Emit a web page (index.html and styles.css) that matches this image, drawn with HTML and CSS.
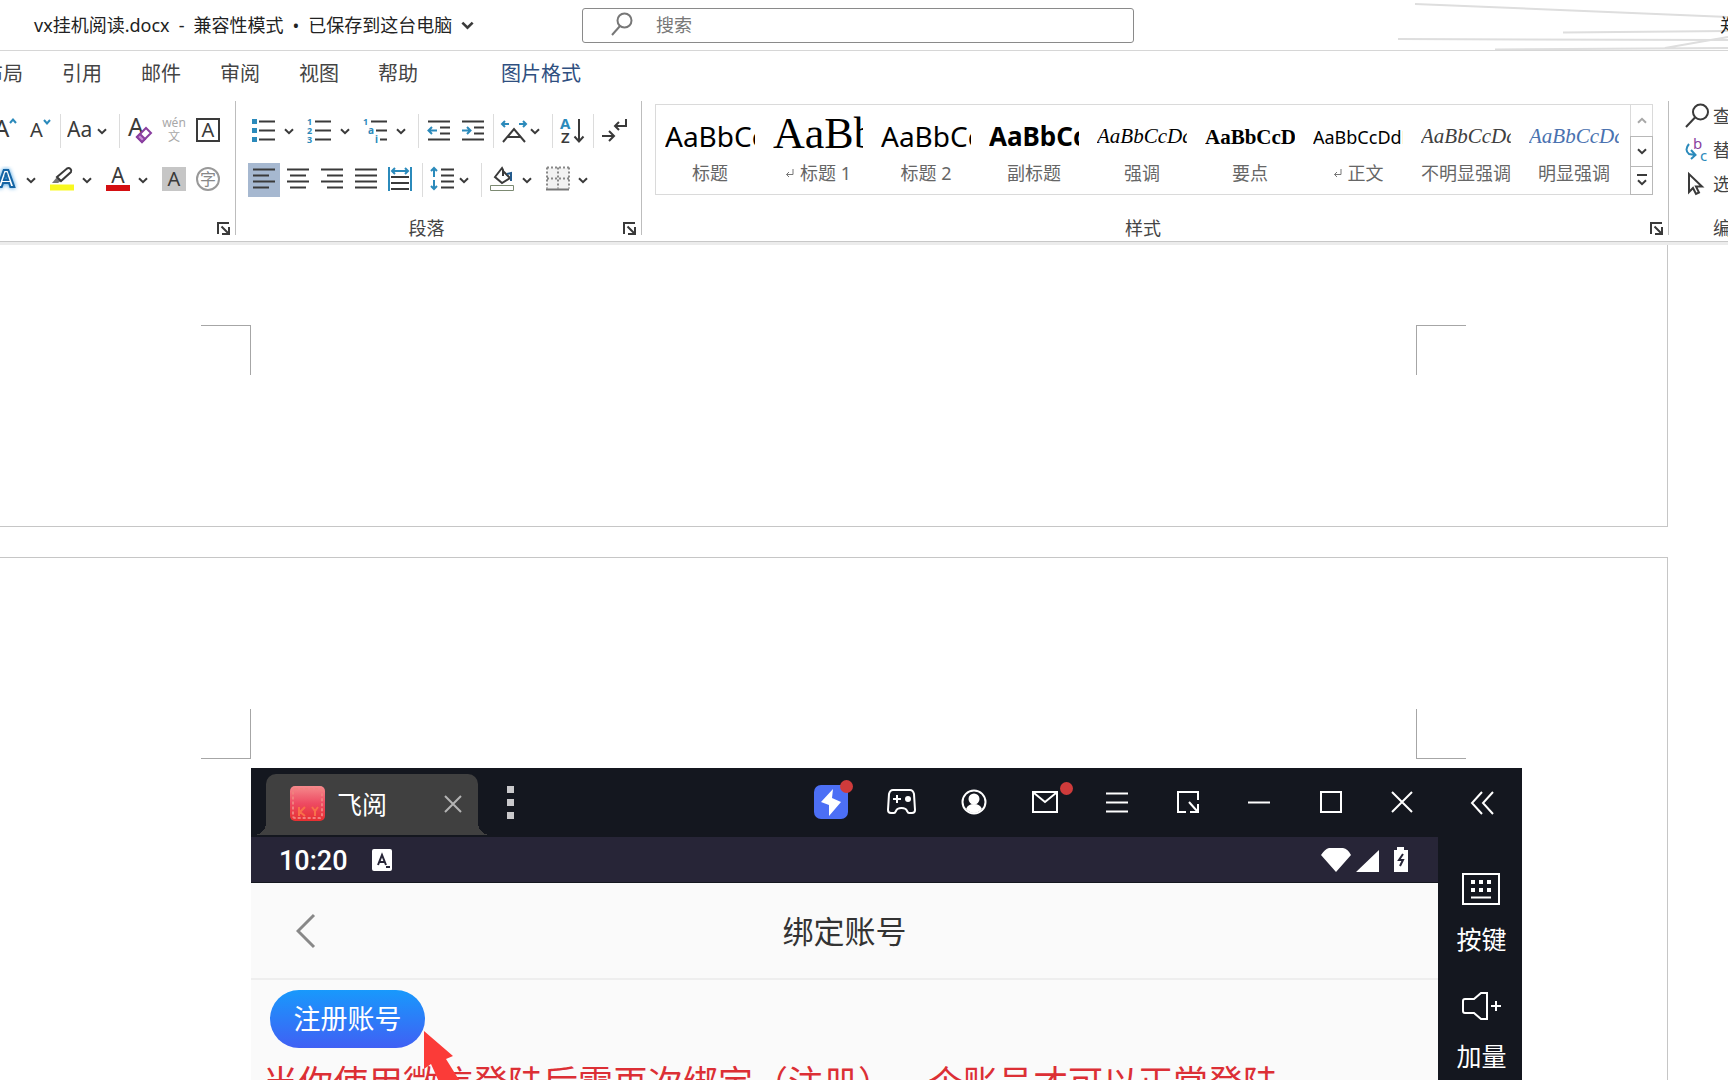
FILE: index.html
```html
<!DOCTYPE html>
<html lang="zh-CN">
<head>
<meta charset="utf-8">
<meta name="viewport" content="width=device-width, initial-scale=1">
<title>vx挂机阅读.docx</title>
<link rel="stylesheet" href="styles.css">
</head>
<body>
<svg class="defs" aria-hidden="true">
  <symbol id="caret" viewBox="0 0 10 7"><path d="M1 1.200l4 4 4-4"/></symbol>
  <symbol id="launch" viewBox="0 0 13 13"><path d="M1 12V1h11M4.500 4.500l7 7M12 5v7H5"/></symbol>
  <symbol id="enter" viewBox="0 0 9 9"><path d="M8 0v5.500H1.500M4 3L1.500 5.500 4 8"/></symbol>
</svg>

<header class="titlebar">
  <svg class="decor" viewBox="0 0 330 50" aria-hidden="true"><path d="M17 4L330 17M165 32.500L330 31M0 39L330 40M97 49.500L330 48M267 48L330 37"/></svg>
  <h1 class="doc-title"><span>vx挂机阅读.docx</span><span>-</span><span>兼容性模式</span><span>•</span><span>已保存到这台电脑</span><svg class="caret caret-lg"><use href="#caret"/></svg></h1>
  <label class="search">
    <svg viewBox="0 0 22 26" aria-hidden="true"><circle cx="13.500" cy="8.500" r="7"/><path d="M9 14L1 23"/></svg>
    <input type="search" placeholder="搜索" aria-label="搜索">
  </label>
  <span class="user">郑</span>
</header>

<nav class="tabs">
  <a href="#">布局</a><a href="#">引用</a><a href="#">邮件</a><a href="#">审阅</a><a href="#">视图</a><a href="#">帮助</a><a href="#" class="contextual">图片格式</a>
</nav>

<section class="ribbon">
  <div class="group font-group">
    <div class="rows">
      <div class="row">
        <button class="tool" aria-label="增大字号"><svg viewBox="0 0 28 28"><text x="2" y="20" font-size="24">A</text><path class="b" d="M18 6l3-3.500L24 6"/></svg></button>
        <button class="tool" aria-label="减小字号"><svg viewBox="0 0 28 28"><text x="4" y="20" font-size="20">A</text><path class="b" d="M18 3l3 3.500L24 3"/></svg></button>
        <i class="sep"></i>
        <button class="tool split narrow" aria-label="更改大小写"><svg viewBox="0 0 28 28"><text x="0" y="20" font-size="21">Aa</text></svg><svg class="caret"><use href="#caret"/></svg></button>
        <i class="sep"></i>
        <button class="tool" aria-label="清除格式"><svg viewBox="0 0 28 28"><text x="2" y="19" font-size="25">A</text><path class="eraser" d="M11 20l9-9 5 5-9 9z"/><path class="eraser-tip" d="M11 20l3-3 5 5-3 3z"/></svg></button>
        <button class="tool faint" aria-label="拼音指南"><svg viewBox="0 0 28 28"><text x="14" y="10" font-size="12" text-anchor="middle">wén</text><text x="14" y="24" font-size="12" text-anchor="middle">文</text></svg></button>
        <button class="tool" aria-label="字符边框"><svg viewBox="0 0 28 28"><rect x="3" y="2" width="22" height="22"/><text x="14" y="20" font-size="20" text-anchor="middle">A</text></svg></button>
      </div>
      <div class="row">
        <button class="tool split" aria-label="文本效果"><svg viewBox="0 0 28 28"><text class="glow" x="14" y="21" font-size="24" text-anchor="middle">A</text></svg><svg class="caret"><use href="#caret"/></svg></button>
        <button class="tool split" aria-label="突出显示"><svg viewBox="0 0 28 28"><path class="fill-grey" d="M4 17l5-6 4 4-3 2z"/><path d="M9 11L19 2.500q2-1 3.500.5t.5 3L13 15z"/><path class="hl" d="M2 21.500h24"/></svg><svg class="caret"><use href="#caret"/></svg></button>
        <button class="tool split" aria-label="字体颜色"><svg viewBox="0 0 28 28"><text x="14" y="17" font-size="21" text-anchor="middle">A</text><path class="fc" d="M2 22h24"/></svg><svg class="caret"><use href="#caret"/></svg></button>
        <button class="tool" aria-label="字符底纹"><svg viewBox="0 0 28 28"><path class="fill-light" d="M2 1h24v24H2z"/><text x="14" y="20" font-size="20" text-anchor="middle">A</text></svg></button>
        <button class="tool ring" aria-label="带圈字符"><svg viewBox="0 0 28 28"><circle cx="14" cy="13" r="11"/><text x="14" y="19" font-size="16" text-anchor="middle">字</text></svg></button>
      </div>
    </div>
    <div class="group-foot"><span></span><button class="launch" aria-label="字体设置"><svg><use href="#launch"/></svg></button></div>
  </div>
  <i class="divider"></i>

  <div class="group para-group">
    <div class="rows">
      <div class="row inset">
        <button class="tool split" aria-label="项目符号"><svg viewBox="0 0 28 28"><path class="bf" d="M2 2h5v5H2zM2 11h5v5H2zM2 20h5v5H2z"/><path d="M9 4.500h16M9 13.500h16M9 22.500h16"/></svg><svg class="caret"><use href="#caret"/></svg></button>
        <button class="tool split" aria-label="编号"><svg viewBox="0 0 28 28"><text class="bt" x="1" y="8" font-size="9">1</text><text class="bt" x="1" y="17" font-size="9">2</text><text class="bt" x="1" y="26" font-size="9">3</text><path d="M9 4.500h16M9 13.500h16M9 22.500h16"/></svg><svg class="caret"><use href="#caret"/></svg></button>
        <button class="tool split" aria-label="多级列表"><svg viewBox="0 0 28 28"><text class="bt" x="1" y="8" font-size="9">1</text><text class="bt" x="6" y="17" font-size="10">a</text><text class="bt" x="13" y="26" font-size="10">i</text><path d="M9 4.500h16M14 13.500h11M18 22.500h7"/></svg><svg class="caret"><use href="#caret"/></svg></button>
        <i class="sep"></i>
        <button class="tool" aria-label="减少缩进"><svg viewBox="0 0 28 28"><path d="M3 4.500h22M15 10.500h10M15 16.500h10M3 22.500h22"/><path class="b" d="M12 13.500H4M7 10l-3.500 3.500L7 17"/></svg></button>
        <button class="tool" aria-label="增加缩进"><svg viewBox="0 0 28 28"><path d="M3 4.500h22M15 10.500h10M15 16.500h10M3 22.500h22"/><path class="b" d="M3 13.500h8M8 10l3.500 3.500L8 17"/></svg></button>
        <i class="sep"></i>
        <button class="tool split narrow" aria-label="中文版式"><svg viewBox="0 0 28 28"><path d="M3 25L14 12l11 13M7 20h14"/><path class="b" d="M2 7h7M5 4L2 7l3 3M26 7h-7M23 4l3 3-3 3"/></svg><svg class="caret"><use href="#caret"/></svg></button>
        <i class="sep"></i>
        <button class="tool" aria-label="排序"><svg viewBox="0 0 28 28"><text class="bt" x="1" y="12" font-size="15">A</text><text x="2" y="26" font-size="15" font-weight="600">Z</text><path d="M20 2v22M15.500 19.500L20 24.500l4.500-5"/></svg></button>
        <i class="sep"></i>
        <button class="tool" aria-label="显示编辑标记"><svg viewBox="0 0 28 28"><path d="M26 2v7H15M19 5l-4 4 4 4M2 19h12M9 14l5 5-5 5"/></svg></button>
      </div>
      <div class="row">
        <div class="aligns">
          <button class="tool align on" aria-label="左对齐"><svg viewBox="0 0 28 28"><path d="M3 3.500h22M3 9.500h16M3 15.500h22M3 21.500h16"/></svg></button>
          <button class="tool align" aria-label="居中"><svg viewBox="0 0 28 28"><path d="M3 3.500h22M6 9.500h16M3 15.500h22M6 21.500h16"/></svg></button>
          <button class="tool align" aria-label="右对齐"><svg viewBox="0 0 28 28"><path d="M3 3.500h22M9 9.500h16M3 15.500h22M9 21.500h16"/></svg></button>
          <button class="tool align" aria-label="两端对齐"><svg viewBox="0 0 28 28"><path d="M3 3.500h22M3 9.500h22M3 15.500h22M3 21.500h22"/></svg></button>
          <button class="tool align" aria-label="分散对齐"><svg viewBox="0 0 28 28"><path d="M5 11h18M5 17h18M5 23h18"/><path class="b" d="M3 1v24M25 1v24M6 5h16M9 2L6 5l3 3M19 2l3 3-3 3"/></svg></button>
        </div>
        <i class="sep"></i>
        <button class="tool split narrow" aria-label="行距"><svg viewBox="0 0 28 28"><path d="M12 3.500h13M12 9.500h13M12 15.500h13M12 21.500h13"/><path class="b" d="M5 2v9M2 5l3-3 3 3M5 14v9M2 20l3 3 3-3"/></svg><svg class="caret"><use href="#caret"/></svg></button>
        <i class="sep"></i>
        <button class="tool split" aria-label="底纹"><svg viewBox="0 0 28 28"><path class="thin" d="M2.500 19.500h23v5h-23z"/><path d="M15 5l7 7-8 5-7-6 7-9 1 2v6"/><path class="bd" d="M19 8l4-1v8"/></svg><svg class="caret"><use href="#caret"/></svg></button>
        <button class="tool split" aria-label="边框"><svg viewBox="0 0 28 28"><path class="tint" d="M3 2h22v21H3z"/><path class="dots" d="M3 1.500h22M3 1.500v21M25 1.500v21M14 1.500v21M3 12.500h22"/><path class="grey" d="M2 23.500h23"/></svg><svg class="caret"><use href="#caret"/></svg></button>
      </div>
    </div>
    <div class="group-foot"><span>段落</span><button class="launch" aria-label="段落设置"><svg><use href="#launch"/></svg></button></div>
  </div>
  <i class="divider"></i>

  <div class="group style-group">
    <div class="gallery">
      <div class="styles">
        <button class="style"><span class="sample big">AaBbCc</span><span class="name">标题</span></button>
        <button class="style"><span class="sample huge">AaBb</span><span class="name"><svg class="enter"><use href="#enter"/></svg>标题 1</span></button>
        <button class="style"><span class="sample big">AaBbCc</span><span class="name">标题 2</span></button>
        <button class="style"><span class="sample big strong">AaBbCc</span><span class="name">副标题</span></button>
        <button class="style"><span class="sample italic">AaBbCcDd</span><span class="name">强调</span></button>
        <button class="style"><span class="sample serif-bold">AaBbCcD</span><span class="name">要点</span></button>
        <button class="style"><span class="sample body">AaBbCcDdE</span><span class="name"><svg class="enter"><use href="#enter"/></svg>正文</span></button>
        <button class="style"><span class="sample italic soft">AaBbCcDd</span><span class="name">不明显强调</span></button>
        <button class="style"><span class="sample italic accent">AaBbCcDd</span><span class="name">明显强调</span></button>
      </div>
      <div class="gallery-nav">
        <button disabled aria-label="上一行"><svg class="caret up"><use href="#caret"/></svg></button>
        <button aria-label="下一行"><svg class="caret"><use href="#caret"/></svg></button>
        <button class="more" aria-label="其他"><svg class="caret"><use href="#caret"/></svg></button>
      </div>
    </div>
    <div class="group-foot"><span>样式</span><button class="launch" aria-label="样式设置"><svg><use href="#launch"/></svg></button></div>
  </div>
  <i class="divider"></i>

  <div class="group edit-group">
    <div class="edits">
      <button class="edit"><svg viewBox="0 0 26 26"><circle cx="16.500" cy="9" r="7.500"/><path d="M11 14.500L2 24"/></svg>查找</button>
      <button class="edit"><svg viewBox="0 0 26 26"><text class="pt" x="9" y="12" font-size="15">b</text><text class="bl" x="16" y="24" font-size="15">c</text><path class="b" d="M5 7q-5 6 0 10l6 1M7 13l4.500 5L7 22"/></svg>替换</button>
      <button class="edit"><svg viewBox="0 0 26 26"><path d="M5 3v18l4-4 3 6 3-1.500-3-6h6z"/></svg>选择</button>
    </div>
    <div class="group-foot edit-foot"><span>编辑</span></div>
  </div>
</section>

<main class="workspace">
  <article class="sheet first">
    <div class="marks top"><i></i><i></i></div>
  </article>
  <article class="sheet second">
    <div class="marks bottom"><i></i><i></i></div>
    <div class="emulator">
      <div class="screen">
        <div class="emu-bar">
          <div class="emu-tab">
            <svg class="app-icon" viewBox="0 0 35 35" aria-hidden="true"><defs><linearGradient id="ag" x2="0" y2="1"><stop offset="0" stop-color="#f58a8c"/><stop offset=".5" stop-color="#ee4a62"/><stop offset="1" stop-color="#e62f30"/></linearGradient></defs><rect width="35" height="35" rx="5" fill="url(#ag)"/><rect x="3" y="3" width="29" height="29" rx="2" fill="none" stroke="#f0807e" stroke-dasharray="3 2"/><path d="M9 21v9M15 21l-5 5 5 4M22 21l3 4 3-4M25 25v5" stroke="#f8704a" stroke-width="2" fill="none"/></svg>
            <span>飞阅</span>
            <button class="tab-close" aria-label="关闭标签"><svg viewBox="0 0 18 18"><path d="M1 1l16 16M17 1L1 17"/></svg></button>
          </div>
          <button class="dots-btn" aria-label="更多"><i></i><i></i><i></i></button>
          <div class="emu-tools">
            <button aria-label="加速"><svg viewBox="0 0 36 36"><rect x="1" y="1" width="34" height="34" rx="7" fill="#4c6ff5" stroke="none"/><path d="M20 5l-1 9 9 4-12 14v-11l-8-3z" fill="#fff" stroke="none"/></svg><i class="badge"></i></button>
            <button aria-label="手柄"><svg viewBox="0 0 36 36"><path d="M9 6h17q3 0 4 4l1 16q0 3-3 3h-3q-1 0-2-2-1-3-5.500-3T12 27q-1 2-2 2H7q-3 0-3-3l1-16q1-4 4-4zM13 11v8M9 15h8"/><circle cx="24" cy="15" r="3" fill="#fff" stroke="none"/></svg></button>
            <button aria-label="账户"><svg viewBox="0 0 36 36"><circle cx="18" cy="18" r="11.500"/><circle cx="18" cy="15" r="4.500" fill="#fff"/><path d="M10 25q2-5 8-5t8 5q-8 8-16 0z" fill="#fff" stroke="none"/></svg></button>
            <button aria-label="邮件"><svg viewBox="0 0 36 36"><path d="M6 8h24v20H6zM7 9l11 9 11-9"/></svg><i class="badge far"></i></button>
            <button aria-label="菜单"><svg viewBox="0 0 36 36"><path d="M7 9.500h22M7 18.500h22M7 27.500h22"/></svg></button>
            <button aria-label="小窗"><svg viewBox="0 0 36 36"><path d="M28 16V8H8v20h8M19 18l8 9M28 20v8h-8"/></svg></button>
            <button aria-label="最小化"><svg viewBox="0 0 36 36"><path d="M7 18.500h22"/></svg></button>
            <button aria-label="最大化"><svg viewBox="0 0 36 36"><path d="M8 8h20v20H8z"/></svg></button>
            <button aria-label="关闭"><svg viewBox="0 0 36 36"><path d="M8 8l20 20M28 8L8 28"/></svg></button>
          </div>
        </div>
        <div class="status">
          <time>10:20</time>
          <svg class="s-a" viewBox="0 0 20 22" aria-hidden="true"><rect width="20" height="22" rx="2" fill="#fff"/><path d="M6 16l4-10 4 10M7 13h6M14 18h4" fill="none" stroke="#272537" stroke-width="2"/></svg>
          <svg class="s-sys" viewBox="0 0 88 26" aria-hidden="true"><path d="M0 8Q4 2 8 1h14q5 1 8 7L15 25zM35 25L58 3v22zM73 3h3V0h7v3h4v22H73z" fill="#fff"/><path d="M82 7l-4 6h4l-3 6" fill="none" stroke="#272537" stroke-width="2"/></svg>
        </div>
        <div class="app">
          <div class="app-head">
            <button class="back" aria-label="返回"><svg viewBox="0 0 20 36"><path d="M18 2L2 18l16 16"/></svg></button>
            <h2>绑定账号</h2>
          </div>
          <div class="app-body">
            <button class="register">注册账号</button>
            <svg class="pointer" viewBox="0 0 40 60" aria-hidden="true"><path d="M0 0l29 25-7 3 20 32H19L7 33l-7 5z"/></svg>
            <p>当你使用微信登陆后需再次绑定（注册）一个账号才可以正常登陆</p>
          </div>
        </div>
      </div>
      <aside class="side">
        <button class="collapse" aria-label="收起"><svg viewBox="0 0 24 24"><path d="M12 1L2 12l10 11M23 1L13 12l10 11"/></svg></button>
        <button class="side-item"><svg viewBox="0 0 40 34"><path d="M2 2h36v30H2zM10 25.500h20"/><path class="keys" d="M10 8h4v4h-4zM18 8h4v4h-4zM26 8h4v4h-4zM10 16h4v4h-4zM18 16h4v4h-4zM26 16h4v4h-4z"/></svg>按键</button>
        <button class="side-item"><svg viewBox="0 0 40 34"><path d="M2 12q0-2 2-2h9l7-6h6v26h-6l-7-6H4q-2 0-2-2zM30 17h10M35 12v10"/></svg>加量</button>
      </aside>
    </div>
  </article>
</main>
</body>
</html>
```
FILE: styles.css
```css
* { box-sizing: border-box; }

body {
  margin: 0;
  height: 100vh;
  overflow: hidden;
  background: #fff;
  color: #222;
  font: 18px/26px "Noto Sans", "Noto Sans CJK SC", sans-serif;
  --ink: #3a3a3a;
  --blue: #2b8abb;
  --line: #c8c8c8;
}

button {
  margin: 0;
  padding: 0;
  border: 0;
  background: none;
  color: inherit;
  font: inherit;
}

svg { display: block; flex: none; }
i { display: block; flex: none; }
.defs { width: 0; height: 0; position: absolute; }

/* title bar */
.titlebar {
  position: relative;
  display: grid;
  grid-template-columns: 582px minmax(200px, 552px) 1fr;
  align-items: center;
  height: 51px;
  border-bottom: 1px solid #d6d6d6;
  overflow: hidden;
}
.decor {
  position: absolute;
  top: 0;
  right: 0;
  width: 330px;
  height: 50px;
  fill: none;
  stroke: #dedede;
  stroke-width: 2;
}
.doc-title {
  display: flex;
  align-items: center;
  gap: 9px;
  margin: 0;
  padding-left: 34px;
  font-size: 18px;
  font-weight: 400;
  white-space: nowrap;
}
.search {
  display: flex;
  align-items: center;
  gap: 23px;
  height: 35px;
  padding-left: 28px;
  border: 1px solid #8a8a8a;
  border-radius: 3px;
}
.search svg { width: 22px; height: 26px; fill: none; stroke: #777; stroke-width: 2; }
.search input {
  flex: 1;
  min-width: 0;
  padding: 0;
  border: 0;
  outline: 0;
  background: none;
  font: inherit;
}
.search input::placeholder { color: #777; opacity: 1; }
.user { position: relative; justify-self: end; width: 8px; white-space: nowrap; }

/* ribbon tabs */
.tabs {
  display: flex;
  gap: 39px;
  height: 45px;
  margin-left: -17px;
  font-size: 20px;
  line-height: 45px;
}
.tabs a { color: #444; text-decoration: none; white-space: nowrap; }
.tabs .contextual { margin-left: 44px; color: #2f4f80; }

/* ribbon */
.ribbon {
  display: flex;
  height: 146px;
  border-bottom: 1px solid var(--line);
  box-shadow: 0 3px 0 #ececec;
  position: relative;
}
.group { display: flex; flex-direction: column; flex: none; overflow: hidden; }
.divider { width: 1px; margin: 5px 0 6px; background: #bdbdbd; }
.rows { display: flex; flex-direction: column; gap: 15px; flex: 1; padding-top: 18px; }
.row { display: flex; align-items: center; gap: 6px; }
.inset { padding-left: 2px; }
.font-group { width: 235px; }
.font-group .row { justify-content: flex-end; padding-right: 13px; }
.para-group { width: 405px; }
.para-group .rows { padding-left: 12px; }
.style-group { flex: 1; min-width: 0; }
.edit-group { width: 59px; }

.sep { width: 1px; height: 34px; background: #dcdcdc; }
.tool {
  display: flex;
  align-items: center;
  flex: none;
  width: 28px;
  height: 34px;
}
.tool svg:first-child { width: 28px; height: 28px; }
.tool svg, .edit svg { fill: none; stroke: var(--ink); stroke-width: 2; }
.split { width: 50px; gap: 6px; }
.narrow { width: 46px; gap: 2px; }
.aligns { display: flex; gap: 2px; }
.align { width: 32px; justify-content: center; }
.on { background: #a6b8d0; }

svg.caret { width: 10px; height: 7px; fill: none; stroke: var(--ink); stroke-width: 2; }
svg.caret-lg { width: 13px; height: 9px; }
svg.up { transform: rotate(180deg); stroke: #a8a8a8; }

svg text { fill: var(--ink); stroke: none; }
svg .b { stroke: var(--blue); }
svg .bf { fill: var(--blue); stroke: none; }
svg .bt { fill: var(--blue); font-weight: 700; }
svg .bl { fill: var(--blue); }
svg .pt { fill: #8a3fa0; }
svg .bd { stroke: #235a8c; }
svg .thin { stroke: #7c8a72; stroke-width: 1; }
svg .dots { stroke: #888; stroke-dasharray: 2 2; }
svg .tint { fill: #f2f2f2; stroke: none; }
svg .grey { stroke: #777; }
svg .eraser { fill: #fff; stroke: #8a3fa0; }
svg .eraser-tip { fill: #c78bd6; stroke: #8a3fa0; }
svg .fill-grey { fill: #777; stroke: none; }
svg .fill-light { fill: #c6c6c6; stroke: none; }
svg .hl { stroke: #f8f820; stroke-width: 6; }
svg .fc { stroke: #d40f12; stroke-width: 6; }
svg .glow {
  fill: #fff;
  stroke: #1464a4;
  stroke-width: 2;
  font-weight: 700;
  filter: drop-shadow(0 0 2px #3a9ade);
}
.faint text { fill: #a8a8a8; }
.ring text { fill: #888; }
.ring svg { stroke: #999; }

.group-foot { display: flex; align-items: center; height: 26px; color: #444; }
.group-foot span { flex: 1; text-align: center; }
.launch { display: flex; justify-content: center; width: 24px; }
.launch svg { width: 13px; height: 13px; fill: none; stroke: var(--ink); stroke-width: 2; }

/* style gallery */
.gallery {
  display: flex;
  height: 91px;
  margin: 8px 15px 20px 13px;
  border: 1px solid #dadada;
}
.styles { display: flex; flex: 1; min-width: 0; overflow: hidden; }
.style {
  display: flex;
  flex-direction: column;
  flex: none;
  width: 108px;
  padding: 10px 9px 0;
}
.sample {
  height: 44px;
  overflow: hidden;
  color: #000;
  text-align: left;
  white-space: nowrap;
}
.big { font-size: 28px; line-height: 42px; }
.strong { font-size: 26px; font-weight: 700; }
.huge { font: 44px/38px "Liberation Serif", serif; }
.italic { font: italic 21px/42px "Liberation Serif", serif; }
.serif-bold { font: bold 21px/44px "Liberation Serif", serif; }
.body { font-size: 18px; line-height: 44px; }
.soft { color: #404040; }
.accent { color: #4a72b0; }
.name {
  display: flex;
  align-items: center;
  justify-content: center;
  gap: 6px;
  line-height: 28px;
  color: #666;
  white-space: nowrap;
}
.enter { width: 9px; height: 9px; fill: none; stroke: #777; }
.gallery-nav {
  display: grid;
  grid-template-rows: 32px 1fr 1fr;
  width: 23px;
  margin: -1px;
}
.gallery-nav button {
  display: flex;
  flex-direction: column;
  gap: 3px;
  align-items: center;
  justify-content: center;
  border: 1px solid #b8b8b8;
  border-bottom: 0;
}
.gallery-nav button:first-child { border-color: #dadada; }
.gallery-nav button:last-child { border-bottom: 1px solid #b8b8b8; }
.more::before { content: ""; width: 10px; height: 2px; background: var(--ink); }

.edits { display: flex; flex-direction: column; gap: 8px; flex: 1; padding: 7px 0 0 15px; }
.edit { display: flex; align-items: center; gap: 3px; height: 26px; color: #444; white-space: nowrap; }
.edit svg { width: 26px; height: 26px; }
.edit-foot { padding-left: 44px; white-space: nowrap; }

/* document */
.sheet { margin-right: 60px; border: 1px solid #c6c6c6; border-left: 0; }
.first { height: 285px; padding-top: 83px; border-top: 0; }
.second { margin-top: 30px; padding-top: 151px; }
.marks { display: flex; justify-content: space-between; padding: 0 201px; }
.marks i { width: 50px; height: 50px; border: 0 solid #a6a6a6; }
.marks i:first-child { border-right-width: 1px; }
.marks i:last-child { border-left-width: 1px; }
.top i { border-top-width: 1px; }
.bottom i { border-bottom-width: 1px; }

/* pasted emulator window */
.emulator {
  display: grid;
  grid-template-columns: 1fr 84px;
  margin: 9px 145px 0 251px;
  background: #14171f;
  color: #fff;
}
.emulator svg { fill: none; stroke: #fff; stroke-width: 2; }
.emulator .app-icon, .emulator .status svg { stroke: none; }
.screen { min-width: 0; }
.emu-bar { display: flex; align-items: center; height: 69px; padding: 0 18px 0 15px; }
.emu-tab {
  position: relative;
  display: flex;
  align-items: center;
  gap: 12px;
  width: 212px;
  height: 61px;
  margin-top: 4px;
  padding: 0 16px 2px 24px;
  border-radius: 10px 10px 0 0;
  background: #404040;
  font-size: 25px;
}
.emu-tab::before, .emu-tab::after {
  content: "";
  position: absolute;
  bottom: 0;
  width: 12px;
  height: 12px;
}
.emu-tab::before { right: 100%; background: radial-gradient(circle at 0 0, transparent 12px, #404040 12px); }
.emu-tab::after { left: 100%; background: radial-gradient(circle at 100% 0, transparent 12px, #404040 12px); }
.app-icon { width: 35px; height: 35px; }
.tab-close { margin-left: auto; }
.tab-close svg { width: 18px; height: 18px; stroke: #b4b4b4; }
.dots-btn { display: grid; gap: 6px; margin-left: 29px; }
.dots-btn i { width: 7px; height: 7px; background: #c9c9cb; }
.emu-tools {
  display: flex;
  justify-content: space-between;
  width: 607px;
  margin-left: auto;
  padding-bottom: 2px;
}
.emu-tools button { position: relative; }
.emu-tools svg { width: 36px; height: 36px; }
.badge {
  position: absolute;
  top: -4px;
  right: -4px;
  width: 13px;
  height: 13px;
  border-radius: 50%;
  background: #cf3b3b;
}
.far { top: -2px; right: -10px; }

.status {
  display: flex;
  align-items: center;
  height: 46px;
  padding: 0 29px 0 28px;
  border-bottom: 1px solid #14171f;
  background: #272537;
  font: 500 27px/42px Roboto, sans-serif;
}
.status time { padding-top: 3px; }
.s-a { width: 20px; height: 22px; margin-left: 24px; }
.s-sys { width: 88px; height: 26px; margin-left: auto; }

.app { background: #fafafa; color: #333; }
.app-head {
  display: grid;
  grid-template-columns: 80px 1fr 80px;
  align-items: center;
  height: 97px;
  border-bottom: 2px solid #eee;
}
.back { padding-left: 45px; }
.emulator .back svg { width: 20px; height: 36px; stroke: #888; stroke-width: 3; }
.app-head h2 { margin: 0; font-size: 31px; font-weight: 400; line-height: 42px; text-align: center; }
.app-body { position: relative; padding: 10px 12px 40px; }
.register {
  display: block;
  width: 155px;
  height: 58px;
  margin-left: 7px;
  border-radius: 29px;
  background: linear-gradient(#1899fc, #4060f4);
  color: #fff;
  font-size: 27px;
}
.app-body p { margin: 15px 0 0; color: #dc2f35; font-size: 35px; line-height: 40px; white-space: nowrap; }
.emulator .pointer {
  position: absolute;
  left: 173px;
  top: 51px;
  width: 40px;
  height: 60px;
  fill: #fb3b38;
  stroke: none;
}

.side { display: flex; flex-direction: column; align-items: center; padding-left: 3px; }
.collapse { height: 69px; }
.collapse svg { width: 24px; height: 24px; }
.side-item {
  display: flex;
  flex-direction: column;
  align-items: center;
  gap: 16px;
  height: 117px;
  padding-top: 35px;
  font-size: 25px;
  line-height: 34px;
}
.side-item svg { width: 40px; height: 34px; }
.emulator .keys { fill: #fff; stroke: none; }
```
